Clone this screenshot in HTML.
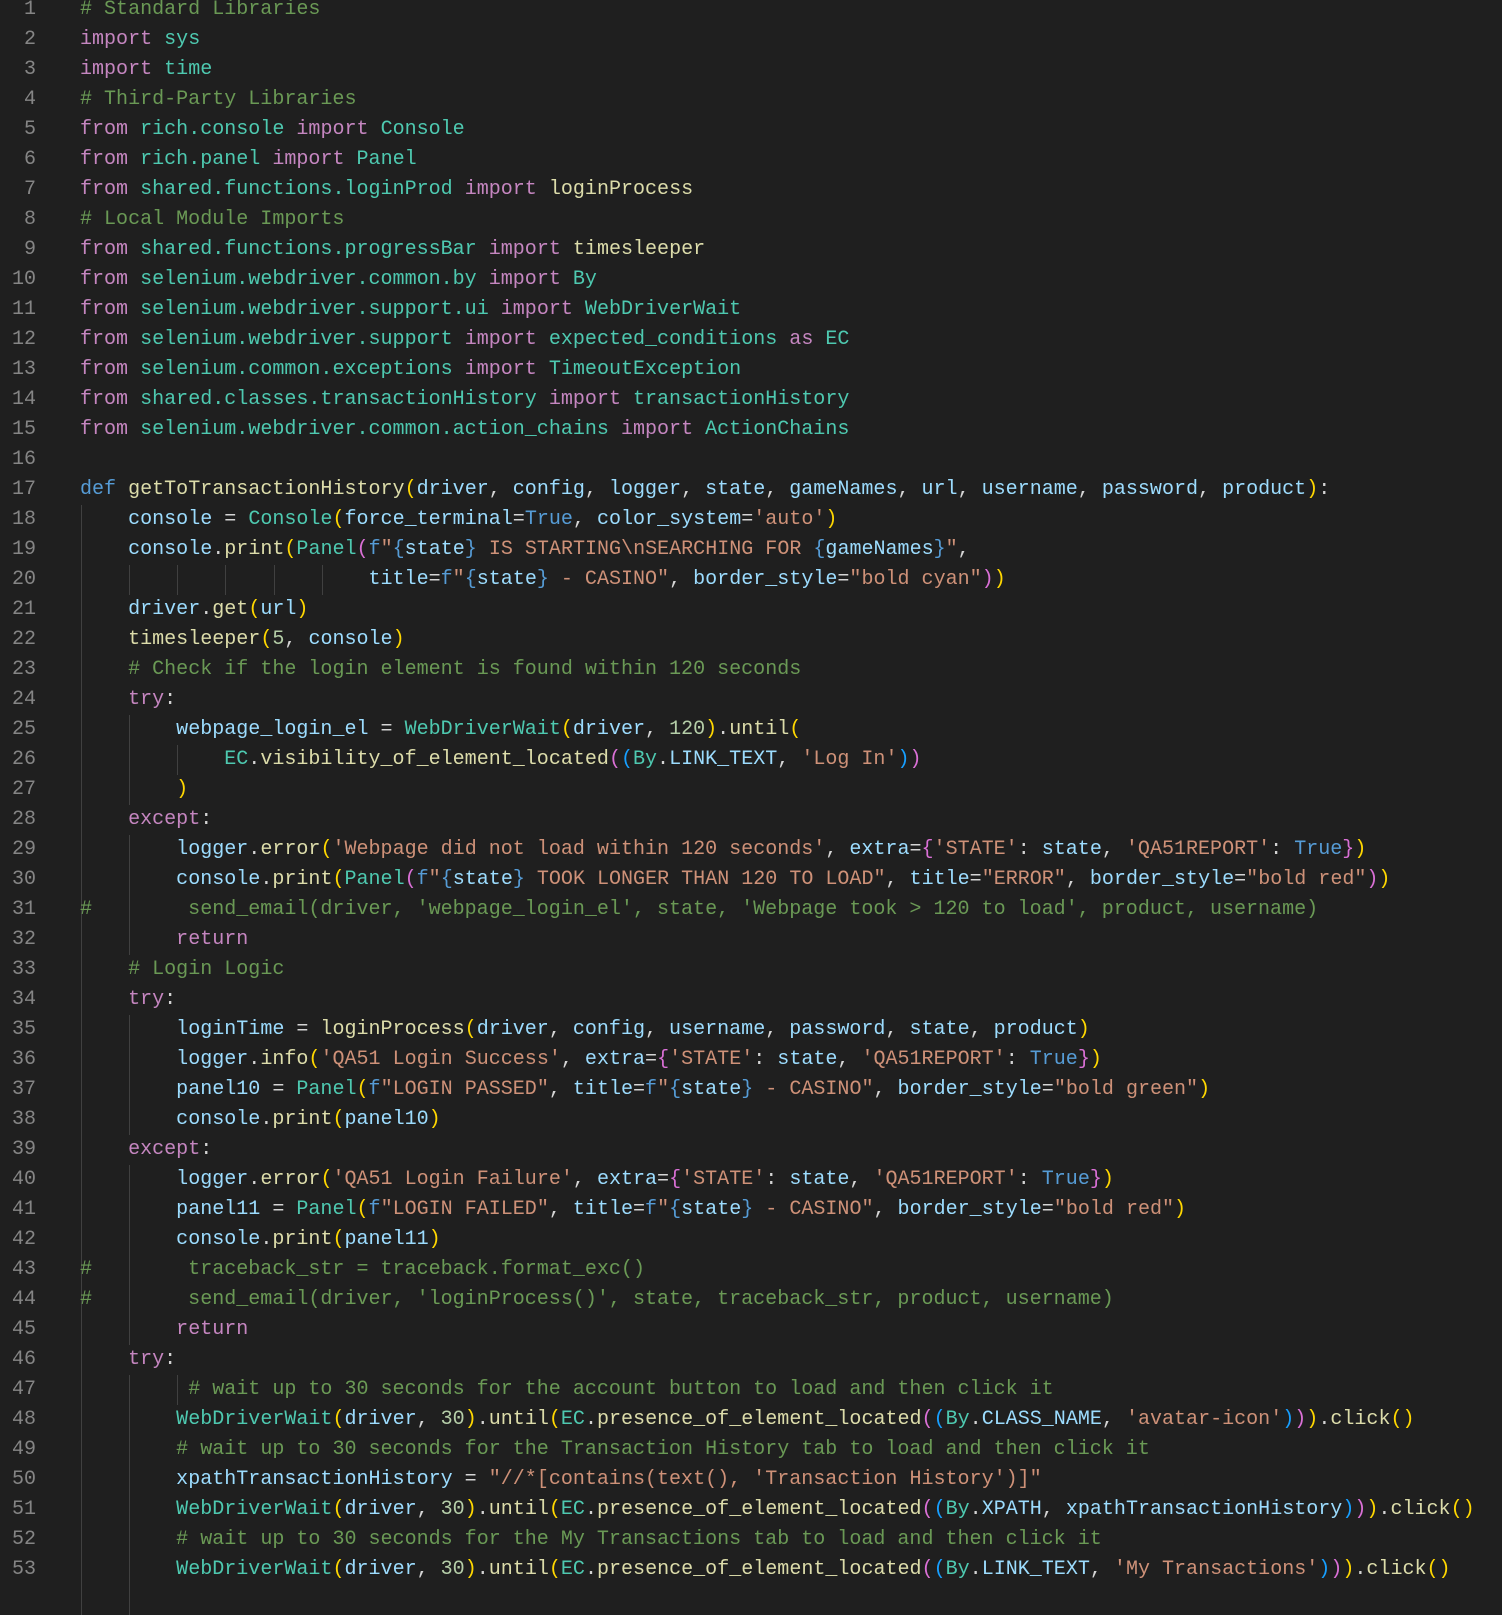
<!DOCTYPE html>
<html><head><meta charset="utf-8"><style>
html,body{margin:0;padding:0;background:#1f1f1f;}
body{width:1502px;height:1588px;position:relative;overflow:hidden;font-family:"Liberation Mono",monospace;font-size:20.05px;color:#d4d4d4;}
.l{position:absolute;left:0;height:30px;line-height:30px;white-space:pre;}
.n{position:absolute;width:36px;text-align:right;color:#858585;}
.t{position:absolute;left:80px;}
.g{position:absolute;width:1px;background:#404040;}
.k{color:#c586c0}.d{color:#569cd6}.f{color:#dcdcaa}.v{color:#9cdcfe}.c{color:#4ec9b0}.s{color:#ce9178}.m{color:#6a9955}.u{color:#b5cea8}
.y{color:#ffd700}.p{color:#da70d6}.b{color:#179fff}
</style></head><body>
<div id="g"></div>
<div id="code"></div>
<script>
var L=[
'<span class="m"># Standard Libraries</span>',
'<span class="k">import</span> <span class="c">sys</span>',
'<span class="k">import</span> <span class="c">time</span>',
'<span class="m"># Third-Party Libraries</span>',
'<span class="k">from</span> <span class="c">rich.console</span> <span class="k">import</span> <span class="c">Console</span>',
'<span class="k">from</span> <span class="c">rich.panel</span> <span class="k">import</span> <span class="c">Panel</span>',
'<span class="k">from</span> <span class="c">shared.functions.loginProd</span> <span class="k">import</span> <span class="f">loginProcess</span>',
'<span class="m"># Local Module Imports</span>',
'<span class="k">from</span> <span class="c">shared.functions.progressBar</span> <span class="k">import</span> <span class="f">timesleeper</span>',
'<span class="k">from</span> <span class="c">selenium.webdriver.common.by</span> <span class="k">import</span> <span class="c">By</span>',
'<span class="k">from</span> <span class="c">selenium.webdriver.support.ui</span> <span class="k">import</span> <span class="c">WebDriverWait</span>',
'<span class="k">from</span> <span class="c">selenium.webdriver.support</span> <span class="k">import</span> <span class="c">expected_conditions</span> <span class="k">as</span> <span class="c">EC</span>',
'<span class="k">from</span> <span class="c">selenium.common.exceptions</span> <span class="k">import</span> <span class="c">TimeoutException</span>',
'<span class="k">from</span> <span class="c">shared.classes.transactionHistory</span> <span class="k">import</span> <span class="c">transactionHistory</span>',
'<span class="k">from</span> <span class="c">selenium.webdriver.common.action_chains</span> <span class="k">import</span> <span class="c">ActionChains</span>',
'',
'<span class="d">def</span> <span class="f">getToTransactionHistory</span><span class="y">(</span><span class="v">driver</span>, <span class="v">config</span>, <span class="v">logger</span>, <span class="v">state</span>, <span class="v">gameNames</span>, <span class="v">url</span>, <span class="v">username</span>, <span class="v">password</span>, <span class="v">product</span><span class="y">)</span>:',
'    <span class="v">console</span> = <span class="c">Console</span><span class="y">(</span><span class="v">force_terminal</span>=<span class="d">True</span>, <span class="v">color_system</span>=<span class="s">\'auto\'</span><span class="y">)</span>',
'    <span class="v">console</span>.<span class="f">print</span><span class="y">(</span><span class="c">Panel</span><span class="p">(</span><span class="d">f</span><span class="s">"</span><span class="d">{</span><span class="v">state</span><span class="d">}</span><span class="s"> IS STARTING\\nSEARCHING FOR </span><span class="d">{</span><span class="v">gameNames</span><span class="d">}</span><span class="s">"</span>,',
'                        <span class="v">title</span>=<span class="d">f</span><span class="s">"</span><span class="d">{</span><span class="v">state</span><span class="d">}</span><span class="s"> - CASINO"</span>, <span class="v">border_style</span>=<span class="s">"bold cyan"</span><span class="p">)</span><span class="y">)</span>',
'    <span class="v">driver</span>.<span class="f">get</span><span class="y">(</span><span class="v">url</span><span class="y">)</span>',
'    <span class="f">timesleeper</span><span class="y">(</span><span class="u">5</span>, <span class="v">console</span><span class="y">)</span>',
'    <span class="m"># Check if the login element is found within 120 seconds</span>',
'    <span class="k">try</span>:',
'        <span class="v">webpage_login_el</span> = <span class="c">WebDriverWait</span><span class="y">(</span><span class="v">driver</span>, <span class="u">120</span><span class="y">)</span>.<span class="f">until</span><span class="y">(</span>',
'            <span class="c">EC</span>.<span class="f">visibility_of_element_located</span><span class="p">(</span><span class="b">(</span><span class="c">By</span>.<span class="v">LINK_TEXT</span>, <span class="s">\'Log In\'</span><span class="b">)</span><span class="p">)</span>',
'        <span class="y">)</span>',
'    <span class="k">except</span>:',
'        <span class="v">logger</span>.<span class="f">error</span><span class="y">(</span><span class="s">\'Webpage did not load within 120 seconds\'</span>, <span class="v">extra</span>=<span class="p">{</span><span class="s">\'STATE\'</span>: <span class="v">state</span>, <span class="s">\'QA51REPORT\'</span>: <span class="d">True</span><span class="p">}</span><span class="y">)</span>',
'        <span class="v">console</span>.<span class="f">print</span><span class="y">(</span><span class="c">Panel</span><span class="p">(</span><span class="d">f</span><span class="s">"</span><span class="d">{</span><span class="v">state</span><span class="d">}</span><span class="s"> TOOK LONGER THAN 120 TO LOAD"</span>, <span class="v">title</span>=<span class="s">"ERROR"</span>, <span class="v">border_style</span>=<span class="s">"bold red"</span><span class="p">)</span><span class="y">)</span>',
'<span class="m">#        send_email(driver, \'webpage_login_el\', state, \'Webpage took &gt; 120 to load\', product, username)</span>',
'        <span class="k">return</span>',
'    <span class="m"># Login Logic</span>',
'    <span class="k">try</span>:',
'        <span class="v">loginTime</span> = <span class="f">loginProcess</span><span class="y">(</span><span class="v">driver</span>, <span class="v">config</span>, <span class="v">username</span>, <span class="v">password</span>, <span class="v">state</span>, <span class="v">product</span><span class="y">)</span>',
'        <span class="v">logger</span>.<span class="f">info</span><span class="y">(</span><span class="s">\'QA51 Login Success\'</span>, <span class="v">extra</span>=<span class="p">{</span><span class="s">\'STATE\'</span>: <span class="v">state</span>, <span class="s">\'QA51REPORT\'</span>: <span class="d">True</span><span class="p">}</span><span class="y">)</span>',
'        <span class="v">panel10</span> = <span class="c">Panel</span><span class="y">(</span><span class="d">f</span><span class="s">"LOGIN PASSED"</span>, <span class="v">title</span>=<span class="d">f</span><span class="s">"</span><span class="d">{</span><span class="v">state</span><span class="d">}</span><span class="s"> - CASINO"</span>, <span class="v">border_style</span>=<span class="s">"bold green"</span><span class="y">)</span>',
'        <span class="v">console</span>.<span class="f">print</span><span class="y">(</span><span class="v">panel10</span><span class="y">)</span>',
'    <span class="k">except</span>:',
'        <span class="v">logger</span>.<span class="f">error</span><span class="y">(</span><span class="s">\'QA51 Login Failure\'</span>, <span class="v">extra</span>=<span class="p">{</span><span class="s">\'STATE\'</span>: <span class="v">state</span>, <span class="s">\'QA51REPORT\'</span>: <span class="d">True</span><span class="p">}</span><span class="y">)</span>',
'        <span class="v">panel11</span> = <span class="c">Panel</span><span class="y">(</span><span class="d">f</span><span class="s">"LOGIN FAILED"</span>, <span class="v">title</span>=<span class="d">f</span><span class="s">"</span><span class="d">{</span><span class="v">state</span><span class="d">}</span><span class="s"> - CASINO"</span>, <span class="v">border_style</span>=<span class="s">"bold red"</span><span class="y">)</span>',
'        <span class="v">console</span>.<span class="f">print</span><span class="y">(</span><span class="v">panel11</span><span class="y">)</span>',
'<span class="m">#        traceback_str = traceback.format_exc()</span>',
'<span class="m">#        send_email(driver, \'loginProcess()\', state, traceback_str, product, username)</span>',
'        <span class="k">return</span>',
'    <span class="k">try</span>:',
'         <span class="m"># wait up to 30 seconds for the account button to load and then click it</span>',
'        <span class="c">WebDriverWait</span><span class="y">(</span><span class="v">driver</span>, <span class="u">30</span><span class="y">)</span>.<span class="f">until</span><span class="y">(</span><span class="c">EC</span>.<span class="f">presence_of_element_located</span><span class="p">(</span><span class="b">(</span><span class="c">By</span>.<span class="v">CLASS_NAME</span>, <span class="s">\'avatar-icon\'</span><span class="b">)</span><span class="p">)</span><span class="y">)</span>.<span class="f">click</span><span class="y">()</span>',
'        <span class="m"># wait up to 30 seconds for the Transaction History tab to load and then click it</span>',
'        <span class="v">xpathTransactionHistory</span> = <span class="s">"//*[contains(text(), \'Transaction History\')]"</span>',
'        <span class="c">WebDriverWait</span><span class="y">(</span><span class="v">driver</span>, <span class="u">30</span><span class="y">)</span>.<span class="f">until</span><span class="y">(</span><span class="c">EC</span>.<span class="f">presence_of_element_located</span><span class="p">(</span><span class="b">(</span><span class="c">By</span>.<span class="v">XPATH</span>, <span class="v">xpathTransactionHistory</span><span class="b">)</span><span class="p">)</span><span class="y">)</span>.<span class="f">click</span><span class="y">()</span>',
'        <span class="m"># wait up to 30 seconds for the My Transactions tab to load and then click it</span>',
'        <span class="c">WebDriverWait</span><span class="y">(</span><span class="v">driver</span>, <span class="u">30</span><span class="y">)</span>.<span class="f">until</span><span class="y">(</span><span class="c">EC</span>.<span class="f">presence_of_element_located</span><span class="p">(</span><span class="b">(</span><span class="c">By</span>.<span class="v">LINK_TEXT</span>, <span class="s">\'My Transactions\'</span><span class="b">)</span><span class="p">)</span><span class="y">)</span>.<span class="f">click</span><span class="y">()</span>'
];
var h='',LH=30,T=-5,CW=12.03;
for(var i=0;i<L.length;i++){
  h+='<div class="l" style="top:'+(T+i*LH).toFixed(1)+'px;width:1502px"><span class="n">'+(i+1)+'</span><span class="t">'+L[i]+'</span></div>';
}
document.getElementById('code').innerHTML=h;
var G=[[0,18,54],[4,25,27],[4,29,32],[4,35,38],[4,40,45],[4,47,54],[8,26,26],[8,47,47],
[4,20,20],[8,20,20],[12,20,20],[16,20,20],[20,20,20]];
var g='';
for(var j=0;j<G.length;j++){var a=G[j];
  g+='<div class="g" style="left:'+(81+a[0]*CW).toFixed(1)+'px;top:'+(T+(a[1]-1)*LH).toFixed(1)+'px;height:'+((a[2]-a[1]+1)*LH).toFixed(1)+'px"></div>';}
document.getElementById('g').innerHTML=g;
</script>
</body></html>
